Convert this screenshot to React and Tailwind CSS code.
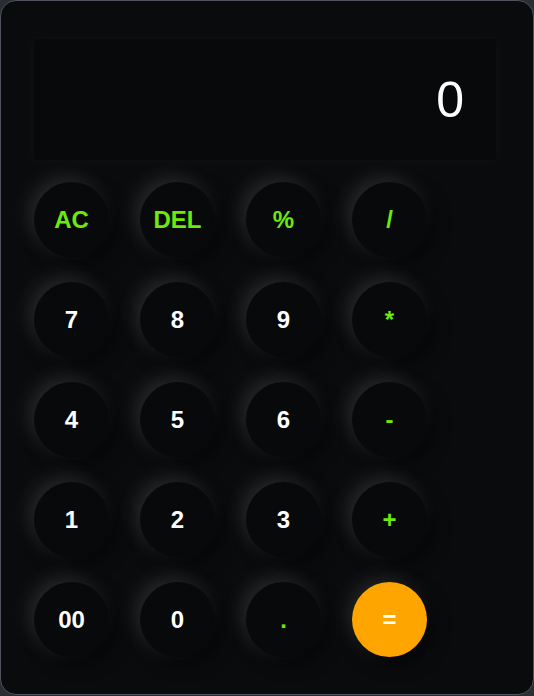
import React from 'react'

const keys = [
  { label: 'AC', kind: 'op' },
  { label: 'DEL', kind: 'op' },
  { label: '%', kind: 'op' },
  { label: '/', kind: 'op' },
  { label: '7' },
  { label: '8' },
  { label: '9' },
  { label: '*', kind: 'op' },
  { label: '4' },
  { label: '5' },
  { label: '6' },
  { label: '-', kind: 'op' },
  { label: '1' },
  { label: '2' },
  { label: '3' },
  { label: '+', kind: 'op' },
  { label: '00' },
  { label: '0' },
  { label: '.', kind: 'op' },
  { label: '=', kind: 'eq' },
]

const Key = ({ label, kind }) => {
  const base = 'w-[75px] h-[75px] rounded-full flex items-center justify-center text-[24px] font-bold cursor-pointer'
  const look =
    kind === 'eq'
      ? 'bg-[#ffa500] text-white shadow-[-6px_-6px_20px_rgba(255,255,255,0.1),6px_6px_18px_rgba(0,0,0,0.6)]'
      : kind === 'op'
      ? 'bg-[#08090b] text-[#6cea0c] shadow-[-6px_-6px_20px_rgba(255,255,255,0.12),6px_6px_18px_rgba(0,0,0,0.6)]'
      : 'bg-[#08090b] text-white shadow-[-6px_-6px_20px_rgba(255,255,255,0.12),6px_6px_18px_rgba(0,0,0,0.6)]'
  return <button className={`${base} ${look}`}>{label}</button>
}

const App = () => {
  const [value] = React.useState('0')

  return (
    <div className="min-h-screen bg-[#2a2d32]" style={{ fontFamily: '"Liberation Sans", Arial, sans-serif' }}>
      <div className="h-[695px] rounded-[16px] border border-[#4f535b] bg-[#0a0b0d] pl-[33px] pr-[37px] pt-[38px]">
        {/* display */}
        <div className="h-[121px] bg-[#08090b] shadow-[0_0_12px_rgba(255,255,255,0.04)] flex items-center justify-end pr-[32px]">
          <span className="text-[50px] text-white font-normal leading-none">{value}</span>
        </div>

        {/* keypad */}
        <div className="mt-[22px] grid grid-cols-[repeat(4,75px)] gap-x-[31px] gap-y-[25px]">
          {keys.map((k) => (
            <Key key={k.label} {...k} />
          ))}
        </div>
      </div>
    </div>
  )
}

export default App
